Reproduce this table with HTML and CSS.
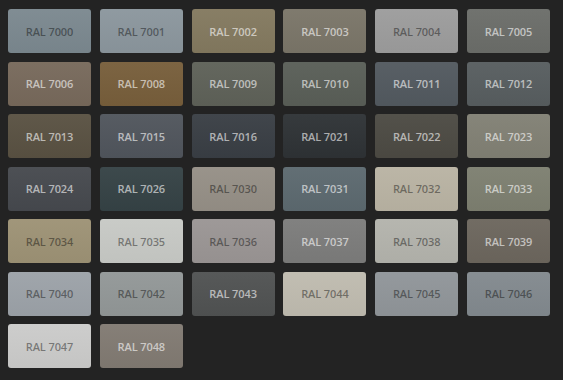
FILE: index.html
```html
<!DOCTYPE html>
<html>
<head>
<meta charset="utf-8">
<link rel="stylesheet" href="styles.css">
</head>
<body>
<div class="palette">
  <div class="sw dk" style="background-color:#7b888f">RAL 7000</div>
  <div class="sw dk" style="background-color:#8b969d">RAL 7001</div>
  <div class="sw lt" style="background-color:#83795f">RAL 7002</div>
  <div class="sw lt" style="background-color:#7a7568">RAL 7003</div>
  <div class="sw dk" style="background-color:#9c9c9c">RAL 7004</div>
  <div class="sw lt" style="background-color:#6b6d69">RAL 7005</div>
  <div class="sw lt" style="background-color:#77695b">RAL 7006</div>
  <div class="sw lt" style="background-color:#775e3b">RAL 7008</div>
  <div class="sw lt" style="background-color:#5e6158">RAL 7009</div>
  <div class="sw lt" style="background-color:#595e57">RAL 7010</div>
  <div class="sw lt" style="background-color:#52595f">RAL 7011</div>
  <div class="sw lt" style="background-color:#575d5f">RAL 7012</div>
  <div class="sw lt" style="background-color:#595142">RAL 7013</div>
  <div class="sw lt" style="background-color:#50555c">RAL 7015</div>
  <div class="sw lt" style="background-color:#393e44">RAL 7016</div>
  <div class="sw lt" style="background-color:#2e3235">RAL 7021</div>
  <div class="sw lt" style="background-color:#4c4a43">RAL 7022</div>
  <div class="sw lt" style="background-color:#818074">RAL 7023</div>
  <div class="sw lt" style="background-color:#46494e">RAL 7024</div>
  <div class="sw lt" style="background-color:#354245">RAL 7026</div>
  <div class="sw dk" style="background-color:#958f86">RAL 7030</div>
  <div class="sw lt" style="background-color:#5c696f">RAL 7031</div>
  <div class="sw dk" style="background-color:#b9b3a3">RAL 7032</div>
  <div class="sw lt" style="background-color:#7d7f70">RAL 7033</div>
  <div class="sw dk" style="background-color:#9d9275">RAL 7034</div>
  <div class="sw dk" style="background-color:#c7c9c5">RAL 7035</div>
  <div class="sw dk" style="background-color:#9a9594">RAL 7036</div>
  <div class="sw lt" style="background-color:#7c7c7b">RAL 7037</div>
  <div class="sw dk" style="background-color:#b3b3ac">RAL 7038</div>
  <div class="sw lt" style="background-color:#6c665d">RAL 7039</div>
  <div class="sw dk" style="background-color:#9ca2a8">RAL 7040</div>
  <div class="sw dk" style="background-color:#929797">RAL 7042</div>
  <div class="sw lt" style="background-color:#505252">RAL 7043</div>
  <div class="sw dk" style="background-color:#bfbbaf">RAL 7044</div>
  <div class="sw dk" style="background-color:#909599">RAL 7045</div>
  <div class="sw dk" style="background-color:#82898e">RAL 7046</div>
  <div class="sw dk" style="background-color:#cbcbca">RAL 7047</div>
  <div class="sw lt" style="background-color:#817a72">RAL 7048</div>
</div>
</body>
</html>
```
FILE: styles.css
```css
html, body {
  margin: 0;
  padding: 0;
  background: #232323;
}
.palette {
  display: grid;
  grid-template-columns: repeat(6, 83px);
  grid-auto-rows: 44px;
  column-gap: 8.8px;
  row-gap: 8.5px;
  padding: 9px 8px;
}
.sw {
  display: flex;
  align-items: center;
  justify-content: center;
  border-radius: 3px;
  font-family: "Open Sans", "DejaVu Sans", sans-serif;
  font-size: 11px;
  font-weight: 600;
  letter-spacing: -0.1px;
  background-image: linear-gradient(to bottom, rgba(255,255,255,0.04), rgba(0,0,0,0.03));
}
.dk { color: rgba(0, 0, 0, 0.42); }
.lt { color: rgba(255, 255, 255, 0.6); }
```
